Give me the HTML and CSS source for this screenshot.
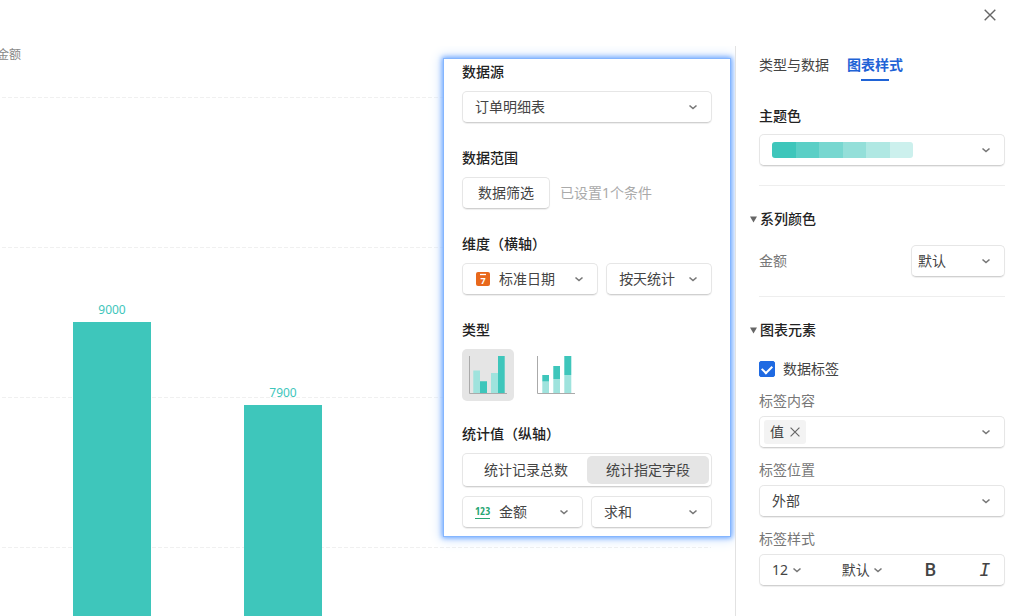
FILE: index.html
```html
<!DOCTYPE html>
<html lang="zh-CN">
<head>
    <meta charset="UTF-8">
    <meta name="viewport" content="width=device-width, initial-scale=1.0">
    <title>图表设置</title>
    <link rel="stylesheet" href="styles.css">
</head>
<body>
    <svg class="sprite" aria-hidden="true">
        <symbol id="chevron" viewBox="0 0 10 10"><path d="M1.5 3.5 5 6.5 8.5 3.5" fill="none" stroke="#777" stroke-width="1.6"/></symbol>
        <symbol id="cross" viewBox="0 0 12 12"><path d="M.7.7 11.3 11.3M11.3.7.7 11.3" fill="none" stroke="#666" stroke-width="1.4"/></symbol>
        <symbol id="triangle" viewBox="0 0 7 7"><path d="M0 .5h7L3.5 6.5z" fill="#666"/></symbol>
    </svg>

    <header class="topbar">
        <button class="icon-btn" type="button" aria-label="关闭"><svg width="12" height="12"><use href="#cross"/></svg></button>
    </header>

    <main class="editor">
        <section class="chart">
            <div class="axis-name">金额</div>
            <div class="plot">
                <div class="grid-lines">
                    <i></i><i></i><i></i><i></i><i></i><i></i>
                </div>
                <div class="bars">
                    <div class="bar" style="height: 75%"><span>9000</span></div>
                    <div class="bar" style="height: 65.8%"><span>7900</span></div>
                </div>
            </div>

            <!-- data settings, floats over the chart -->
            <form class="popup">
                <div class="group">
                    <label class="title" for="source">数据源</label>
                    <div class="select">
                        <select id="source"><option>订单明细表</option></select>
                        <svg class="arrow"><use href="#chevron"/></svg>
                    </div>
                </div>
                <div class="group">
                    <div class="title">数据范围</div>
                    <div class="filter">
                        <button class="btn" type="button">数据筛选</button>
                        <span class="hint">已设置1个条件</span>
                    </div>
                </div>
                <div class="group">
                    <label class="title" for="dimension">维度（横轴）</label>
                    <div class="pair pair-date">
                        <div class="select with-icon">
                            <svg class="lead" width="14" height="14" viewBox="0 0 14 14">
                                <rect width="14" height="14" rx="2" fill="#e8681c"/>
                                <path d="M4 2.5h6" stroke="#fff" stroke-width="1.3"/>
                                <text x="7" y="12" text-anchor="middle" class="day">7</text>
                            </svg>
                            <select id="dimension"><option>标准日期</option></select>
                            <svg class="arrow"><use href="#chevron"/></svg>
                        </div>
                        <div class="select">
                            <select aria-label="统计周期"><option>按天统计</option></select>
                            <svg class="arrow"><use href="#chevron"/></svg>
                        </div>
                    </div>
                </div>
                <div class="group group-types">
                    <div class="title">类型</div>
                    <div class="types">
                        <button class="type active" type="button" aria-label="簇状柱形图">
                            <svg width="52" height="52" viewBox="0 0 52 52">
                                <path d="M11.3 21.5H18V44h-6.7zM29 24h7v20h-7z" fill="#9fe3dd"/>
                                <path d="M18 32.3h7V44h-7zM36 7h6.7v37H36z" fill="#3ec6bb"/>
                                <path d="M7.5 7v37.5h37.5" fill="none" stroke="#aaa"/>
                            </svg>
                        </button>
                        <button class="type" type="button" aria-label="堆积柱形图">
                            <svg width="52" height="52" viewBox="0 0 52 52">
                                <path d="M12.3 32.5H19V44h-6.7zM23.3 30H30v14h-6.7zM34.3 26h7v18h-7z" fill="#9fe3dd"/>
                                <path d="M12.3 26H19v6.5h-6.7zM23.3 17H30v13h-6.7zM34.3 7h7v19h-7z" fill="#3ec6bb"/>
                                <path d="M7.5 7v37.5h37.5" fill="none" stroke="#aaa"/>
                            </svg>
                        </button>
                    </div>
                </div>
                <div class="group">
                    <div class="title">统计值（纵轴）</div>
                    <div class="segment">
                        <button type="button">统计记录总数</button>
                        <button class="active" type="button">统计指定字段</button>
                    </div>
                    <div class="pair">
                        <div class="select with-icon">
                            <span class="lead number-icon">123</span>
                            <select aria-label="统计字段"><option>金额</option></select>
                            <svg class="arrow"><use href="#chevron"/></svg>
                        </div>
                        <div class="select">
                            <select aria-label="统计方式"><option>求和</option></select>
                            <svg class="arrow"><use href="#chevron"/></svg>
                        </div>
                    </div>
                </div>
            </form>
        </section>

        <aside class="sidebar">
            <nav class="tabs">
                <a href="#data">类型与数据</a>
                <a href="#style" class="active">图表样式</a>
            </nav>

            <section class="block">
                <div class="title">主题色</div>
                <button class="select theme" type="button" aria-label="主题色">
                    <span class="swatches"><i></i><i></i><i></i><i></i><i></i><i></i></span>
                    <svg class="arrow"><use href="#chevron"/></svg>
                </button>
            </section>

            <section class="block">
                <button class="toggle" type="button"><svg width="7" height="7"><use href="#triangle"/></svg>系列颜色</button>
                <div class="series">
                    <label for="series-color">金额</label>
                    <div class="select compact">
                        <select id="series-color"><option>默认</option></select>
                        <svg class="arrow"><use href="#chevron"/></svg>
                    </div>
                </div>
            </section>

            <section class="block">
                <button class="toggle" type="button"><svg width="7" height="7"><use href="#triangle"/></svg>图表元素</button>
                <label class="check"><input type="checkbox" checked>数据标签</label>

                <div class="field">
                    <div class="name">标签内容</div>
                    <div class="select multi">
                        <span class="tag">值<button class="icon-btn" type="button" aria-label="移除"><svg width="10" height="10"><use href="#cross"/></svg></button></span>
                        <svg class="arrow"><use href="#chevron"/></svg>
                    </div>
                </div>
                <div class="field">
                    <label class="name" for="position">标签位置</label>
                    <div class="select">
                        <select id="position"><option>外部</option></select>
                        <svg class="arrow"><use href="#chevron"/></svg>
                    </div>
                </div>
                <div class="field">
                    <div class="name">标签样式</div>
                    <div class="toolbar">
                        <div class="mini">
                            <select aria-label="字号"><option>12</option></select>
                            <svg><use href="#chevron"/></svg>
                        </div>
                        <div class="mini">
                            <select aria-label="颜色"><option>默认</option></select>
                            <svg><use href="#chevron"/></svg>
                        </div>
                        <button class="icon-btn bold" type="button" aria-label="加粗">B</button>
                        <button class="icon-btn italic" type="button" aria-label="斜体">I</button>
                    </div>
                </div>
            </section>
        </aside>
    </main>
</body>
</html>
```
FILE: styles.css
```css
* {
    box-sizing: border-box;
}
body {
    margin: 0;
    height: 100vh;
    display: flex;
    flex-direction: column;
    overflow: hidden;
    background: #fff;
    color: #444;
    font: 14px/20px "Noto Sans", "Noto Sans CJK SC", sans-serif;
}
button, select {
    margin: 0;
    padding: 0;
    border: 0;
    background: none;
    color: inherit;
    font: inherit;
}
.sprite {
    display: none;
}
.icon-btn {
    display: flex;
    align-items: center;
    justify-content: center;
}
.topbar {
    height: 46px;
    flex: none;
    display: flex;
    justify-content: flex-end;
    align-items: flex-start;
    padding: 9px 28px;
}
.editor {
    flex: 1;
    min-height: 0;
    display: flex;
}

/* chart */
.chart {
    position: relative;
    flex: 1;
    min-width: 0;
    overflow: hidden;
}
.axis-name {
    height: 51px;
    margin-left: -3px;
    color: #888;
    font-size: 12px;
    line-height: 18px;
}
.plot {
    position: relative;
    height: 900px; /* 12000 at the top, 75px per 1000 */
    margin: 0 24px 0 2px;
}
.grid-lines {
    position: absolute;
    inset: 0;
    display: grid;
    grid-template-rows: repeat(6, 1fr);
}
.grid-lines i {
    height: 1px;
    background: repeating-linear-gradient(90deg, #f0f0f0 0 4px, transparent 4px 6px);
}
.bars {
    position: relative;
    height: 100%;
    display: flex;
    align-items: flex-end;
    gap: 93px;
    padding-left: 71px;
}
.bar {
    width: 78px;
    background: #3ec6bb;
    color: #3ec6bb;
    font-size: 12px;
    text-align: center;
}
.bar span {
    display: block;
    line-height: 18px;
    margin-top: -21px;
}

/* popup */
.popup {
    position: absolute;
    top: 12px;
    right: 4px;
    width: 288px;
    padding: 3px 18px 8px;
    border: 1px solid #85b6ff;
    background: #fff;
    box-shadow: 0 0 5px 1px #6ba6ff, 0 0 12px 2px #cfe2ff;
}
.popup .title {
    margin-bottom: 9px;
}
.group {
    margin-bottom: 25px;
}
.group-types {
    margin-bottom: 23px;
}
.group:last-child {
    margin-bottom: 0;
}
.title {
    display: block;
    margin-bottom: 8px;
    color: #222;
    font-weight: 500;
}
.select, .btn, .segment, .toolbar {
    border: 1px solid #e6e6e6;
    border-bottom-color: #d0d0d0;
    border-radius: 5px;
    background: #fff;
    box-shadow: 0 1px 1px #eee;
}
.select {
    position: relative;
    display: flex;
    align-items: center;
    width: 100%;
    height: 32px;
}
.select select {
    appearance: none;
    width: 100%;
    height: 100%;
    padding: 0 32px 0 12px;
}
.select .arrow {
    position: absolute;
    right: 13px;
    width: 10px;
    height: 10px;
    pointer-events: none;
}
.with-icon select {
    padding-left: 36px;
}
.lead {
    position: absolute;
    left: 13px;
}
.day {
    fill: #fff;
    font-size: 9px;
    font-weight: 700;
}
.number-icon {
    left: 12px;
    height: 14px;
    border-bottom: 1px solid #26a673;
    color: #26a673;
    font: 700 11px/12px "Liberation Sans Narrow", "Open Sans Condensed", "Roboto Condensed", "Liberation Sans", sans-serif;
}
.filter {
    display: flex;
    align-items: center;
    gap: 10px;
}
.btn {
    width: 88px;
    height: 32px;
}
.hint {
    color: #aaa;
}
.pair {
    display: grid;
    grid-template-columns: 1fr 1fr;
    gap: 8px;
}
.pair-date {
    grid-template-columns: 9fr 7fr;
}
.types {
    display: flex;
    gap: 16px;
}
.type {
    width: 52px;
    height: 52px;
    border-radius: 5px;
}
.type svg {
    display: block;
}
.type.active, .segment .active {
    background: #e5e5e5;
}
.segment {
    display: grid;
    grid-template-columns: 1fr 1fr;
    height: 34px;
    margin-bottom: 9px;
    padding: 2px;
}
.segment button {
    border-radius: 5px;
}

/* sidebar */
.sidebar {
    flex: none;
    width: 289px;
    padding: 9px 19px 0 23px;
    border-left: 1px solid #e2e2e2;
}
.tabs {
    display: flex;
    gap: 18px;
    margin-bottom: 25px;
}
.tabs a {
    padding-bottom: 6px;
    color: #444;
    text-decoration: none;
}
.tabs .active {
    color: #1f63d6;
    font-weight: 700;
    background: linear-gradient(#1f63d6, #1f63d6) center bottom / 28px 2px no-repeat;
}
.block + .block {
    margin-top: 19px;
    padding-top: 23px;
    border-top: 1px solid #eee;
}
.theme .swatches {
    display: flex;
    width: 141px;
    height: 16px;
    margin-left: 12px;
    border-radius: 3px;
    overflow: hidden;
}
.swatches i {
    flex: 1;
    background: #3ec6bb;
}
.swatches i:nth-child(2) { background: #5bcfc6; }
.swatches i:nth-child(3) { background: #78d7d0; }
.swatches i:nth-child(4) { background: #94dfd9; }
.swatches i:nth-child(5) { background: #b0e8e3; }
.swatches i:nth-child(6) { background: #ccf0ed; }
.toggle {
    display: flex;
    align-items: center;
    gap: 3px;
    margin-left: -9px;
    color: #222;
    font-weight: 500;
}
.series {
    display: flex;
    align-items: center;
    justify-content: space-between;
    margin-top: 16px;
    color: #777;
}
.series .select {
    width: 94px;
    color: #444;
}
.compact select {
    padding-left: 6px;
}
.check {
    display: flex;
    align-items: center;
    gap: 8px;
    margin: 19px 0 12px;
}
.check input {
    appearance: none;
    display: grid;
    place-items: center;
    width: 16px;
    height: 16px;
    margin: 0;
    border: 1px solid #1f6ae2;
    border-radius: 2px;
}
.check input:checked {
    background: #1f6ae2;
}
.check input:checked::after {
    content: "";
    width: 8px;
    height: 5px;
    margin-bottom: 2px;
    border: solid #fff;
    border-width: 0 0 2px 2px;
    transform: rotate(-45deg);
}
.field {
    margin-bottom: 12px;
}
.name {
    display: block;
    margin-bottom: 5px;
    color: #777;
}
.multi {
    padding-left: 4px;
}
.tag {
    display: flex;
    align-items: center;
    gap: 6px;
    height: 24px;
    padding: 0 6px;
    border-radius: 3px;
    background: #f3f3f3;
}
.toolbar {
    display: flex;
    align-items: center;
    justify-content: space-between;
    height: 32px;
    padding: 0 12px;
}
.mini {
    display: flex;
    align-items: center;
}
.mini select {
    appearance: none;
    padding-right: 13px;
}
.mini svg {
    width: 10px;
    height: 10px;
    margin-left: -10px;
    pointer-events: none;
}
.bold {
    width: 16px;
    font: 500 18px/20px "Roboto", sans-serif;
}
.italic {
    width: 14px;
    font: italic 18px/20px "DejaVu Sans Mono", monospace;
}
```
